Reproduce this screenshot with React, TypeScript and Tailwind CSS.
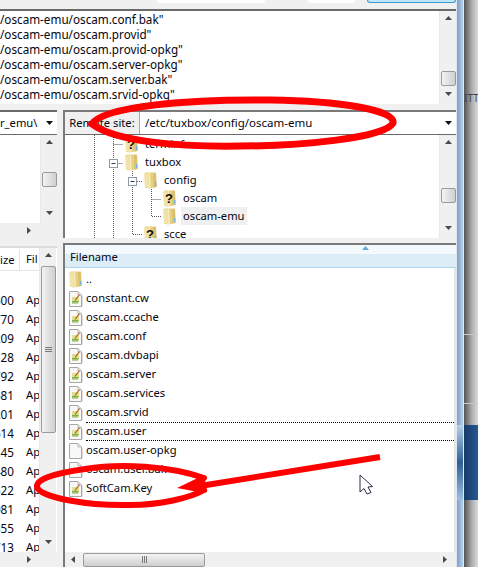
import React from 'react';

const logLines = [
  '/oscam-emu/oscam.conf.bak"',
  '/oscam-emu/oscam.provid"',
  '/oscam-emu/oscam.provid-opkg"',
  '/oscam-emu/oscam.server-opkg"',
  '/oscam-emu/oscam.server.bak"',
  '/oscam-emu/oscam.srvid-opkg"',
];

const sizes = ['500', '770', '209', '128', '792', '581', '201', '614', '145', '480', '522', '081', '355', '713'];

const files = [
  { name: '..', icon: 'folder' },
  { name: 'constant.cw', icon: 'text' },
  { name: 'oscam.ccache', icon: 'text' },
  { name: 'oscam.conf', icon: 'text' },
  { name: 'oscam.dvbapi', icon: 'text' },
  { name: 'oscam.server', icon: 'text' },
  { name: 'oscam.services', icon: 'text' },
  { name: 'oscam.srvid', icon: 'text' },
  { name: 'oscam.user', icon: 'text', focus: true },
  { name: 'oscam.user-opkg', icon: 'blank' },
  { name: 'oscam.user.bak', icon: 'blank' },
  { name: 'SoftCam.Key', icon: 'text' },
];

const Folder = ({ unknown }: { unknown?: boolean }) => (
  <svg width="13" height="17" viewBox="0 0 13 17" className="shrink-0">
    <path d="M0.5 2 Q0.5 0.5 2 0.5 L12 0.5 L12.5 15 L5 16.5 L1 15.5 Z" fill="#e6d084" />
    <path d="M0.5 2 L4.5 1 L5.2 16.3 L1 15.5 Z" fill="#f3e3a6" />
    <path d="M5.2 1 L6 1 L6.6 16 L5.4 16.3 Z" fill="#fbf5d8" />
    <path d="M9 1 L12 1 L12.5 15 L9.5 15.5 Z" fill="#dcc06e" />
    <rect x="11" y="10" width="1.4" height="4" fill="#7bb7dd" />
    {unknown && (
      <text x="6" y="12.5" textAnchor="middle" fontSize="13" fontWeight="700" fontFamily="Liberation Sans, sans-serif" fill="#0a0a0a">
        ?
      </text>
    )}
  </svg>
);

const FileIcon = ({ kind }: { kind: string }) => (
  <svg width="14" height="16" viewBox="0 0 14 16" className="shrink-0">
    <path d="M0.5 0.5 H9 L12.5 4 V15.5 H0.5 Z" fill="#f8f8f8" stroke="#a6a6a6" />
    <path d="M9 0.5 V4 H12.5" fill="#e2e2e2" stroke="#bcbcbc" />
    <path d="M13.5 5 V15.5" stroke="#dedede" />
    {kind === 'text' && (
      <>
        <rect x="3" y="6" width="7" height="6" fill="#dfe08c" />
        <path d="M3 10.5 H9.5 M3 12 H9" stroke="#74ad4c" strokeWidth="1" />
        <path d="M6 9.5 L10.5 3.5" stroke="#b4582e" strokeWidth="1.2" />
      </>
    )}
  </svg>
);

const Arrow = ({ dir }: { dir: 'up' | 'down' | 'left' | 'right' }) => {
  const points = {
    up: '0,4 3.5,0 7,4',
    down: '0,0 7,0 3.5,4',
    left: '4,0 4,7 0,3.5',
    right: '0,0 4,3.5 0,7',
  }[dir];
  return (
    <svg width="7" height="7" viewBox="0 0 7 7" className="shrink-0">
      <polygon points={points} fill="#4a4a4a" />
    </svg>
  );
};

const VScroll = ({ thumbClass, children }: { thumbClass: string; children?: React.ReactNode }) => (
  <div className="flex w-[17px] shrink-0 flex-col items-center border-l border-[#e8e8e8] bg-[#f0f0f0]">
    <div className="flex h-[17px] items-center justify-center"><Arrow dir="up" /></div>
    <div className="w-full flex-1">
      <div className={`mx-auto flex w-[15px] items-center justify-center rounded-[2px] border border-[#9a9a9a] bg-gradient-to-r from-[#f4f4f4] to-[#cfcfcf] ${thumbClass}`}>
        {children}
      </div>
    </div>
    <div className="flex h-[17px] items-center justify-center"><Arrow dir="down" /></div>
  </div>
);

const TreeRow = ({ label, indent, unknown, selected }: { label: string; indent: string; unknown?: boolean; selected?: boolean }) => (
  <div className={`flex h-[18px] items-center gap-[5px] ${indent}`}>
    <Folder unknown={unknown} />
    <span className={`flex h-[18px] items-center px-[2px] ${selected ? 'bg-[#f0f0f0]' : ''}`}>{label}</span>
  </div>
);

export default function App() {
  return (
    <div
      className="relative flex h-[567px] w-[478px] overflow-hidden bg-[#f0f0f0] text-[11.2px] text-[#050510]"
      style={{ fontFamily: '"Noto Sans", sans-serif' }}
    >
      <div className="flex w-[456px] shrink-0 flex-col">
        {/* toolbar remains */}
        <div className="flex h-[9px] items-start bg-[#f0f0f0]">
          <div className="ml-[157px] h-[3px] w-[108px] rounded-b bg-white" />
          <div className="ml-[43px] h-[3px] w-[47px] rounded-b bg-white" />
          <div className="ml-[12px] h-[3px] flex-1 rounded-b-sm border-x border-b border-[#3c9ad0] bg-[#bfe6fa]" />
        </div>

        {/* message log */}
        <div className="flex h-[95px] border-t-2 border-[#6a6a6a] bg-white">
          <div className="flex-1 overflow-hidden pt-[1px] text-[11.7px] leading-[15px]">
            {logLines.map((line) => (
              <div key={line} className="h-[15px] whitespace-nowrap">{line}</div>
            ))}
          </div>
          <VScroll thumbClass="mt-[43px] h-[15px]" />
        </div>

        <div className="h-[6px]" />

        {/* dir trees */}
        <div className="flex h-[128px]">
          <div className="flex w-[57px] shrink-0 flex-col border-t-2 border-[#6a6a6a] bg-white">
            <div className="flex h-[23px] shrink-0 items-center border-b border-[#6a6a6a] pr-[4px]">
              <span className="flex-1 whitespace-nowrap">r_emu\</span>
              <svg width="7" height="4" viewBox="0 0 7 4"><polygon points="0,0 7,0 3.5,4" fill="#111" /></svg>
            </div>
            <div className="flex flex-1">
              <div className="flex-1 bg-white" />
              <VScroll thumbClass="mt-[20px] h-[15px]" />
            </div>
            <div className="flex h-[15px] shrink-0 items-center bg-[#f0f0f0]">
              <div className="flex w-[34px] justify-end"><Arrow dir="right" /></div>
            </div>
          </div>

          <div className="ml-[6px] flex flex-1 flex-col border-t-2 border-l-2 border-[#7a7a7a] bg-white">
            <div className="flex h-[23px] shrink-0 border-b border-[#6a6a6a]">
              <div className="flex w-[75px] items-center justify-center border-r border-[#a8a8a8] bg-[#f0f0f0]">Remote site:</div>
              <div className="flex flex-1 items-center justify-between pl-[5px] pr-[4px] text-[11.5px]">
                <span>/etc/tuxbox/config/oscam-emu</span>
                <svg width="7" height="4" viewBox="0 0 7 4"><polygon points="0,0 7,0 3.5,4" fill="#111" /></svg>
              </div>
            </div>
            <div className="flex flex-1 overflow-hidden">
              <div className="relative flex-1 overflow-hidden">
                <svg className="absolute left-0 top-0" width="200" height="110" viewBox="0 0 200 110">
                  <g stroke="#555" strokeDasharray="1 1" fill="none">
                    <path d="M29.5 0 V105" />
                    <path d="M48.5 0 V105" />
                    <path d="M48.5 9.5 H58 M48.5 28.5 H58" />
                    <path d="M67.5 36 V99.5 H78" />
                    <path d="M72 46.5 H78" />
                    <path d="M86.5 52 V81.5 H96 M86.5 64.5 H96" />
                  </g>
                  <g fill="#fff" stroke="#8e9aa8">
                    <rect x="44.5" y="24.5" width="8" height="8" />
                    <rect x="63.5" y="42.5" width="8" height="8" />
                  </g>
                  <path d="M46.5 28.5 H50.5 M65.5 46.5 H69.5" stroke="#2d3a50" />
                </svg>
                <div className="relative">
                  <TreeRow indent="ml-[60px]" label="terminfo" unknown />
                  <TreeRow indent="ml-[60px]" label="tuxbox" />
                  <TreeRow indent="ml-[79px]" label="config" />
                  <TreeRow indent="ml-[98px]" label="oscam" unknown />
                  <TreeRow indent="ml-[98px]" label="oscam-emu" selected />
                  <TreeRow indent="ml-[79px]" label="scce" unknown />
                </div>
              </div>
              <VScroll thumbClass="mt-[36px] h-[15px]" />
            </div>
          </div>
        </div>

        <div className="h-[5px]" />

        {/* file lists */}
        <div className="flex h-[324px]">
          <div className="mt-[3px] flex w-[57px] shrink-0 flex-col border-t-2 border-[#dcdcdc] bg-white">
            <div className="flex flex-1 overflow-hidden">
              <div className="flex w-[39px] shrink-0 flex-col overflow-hidden">
                <div className="flex h-[23px] shrink-0 items-center border-b border-[#e5e5e5] pt-[1px]">
                  <span className="h-full w-[20px] border-r border-[#e5e5e5] pr-[5px] text-right leading-[22px]">ize</span>
                  <span className="pl-[6px]">Fil</span>
                </div>
                <div className="mt-[1px]">
                  <div className="h-[19px]" />
                  {sizes.map((size) => (
                    <div key={size} className="flex h-[19px] items-center">
                      <span className="w-[14px] text-right text-[11.7px] [direction:rtl]">{size}</span>
                      <span className="ml-[12px]">Ap</span>
                    </div>
                  ))}
                </div>
              </div>
              <VScroll thumbClass="mt-[1px] h-[167px]">
                <div className="flex flex-col gap-[1px]">
                  <div className="h-px w-[7px] bg-[#777]" />
                  <div className="h-px w-[7px] bg-[#777]" />
                  <div className="h-px w-[7px] bg-[#777]" />
                </div>
              </VScroll>
            </div>
            <div className="flex h-[15px] shrink-0 items-center bg-[#f0f0f0]">
              <div className="flex w-[34px] justify-end"><Arrow dir="right" /></div>
            </div>
          </div>

          <div className="ml-[6px] flex flex-1 flex-col border-t-2 border-l-2 border-[#7a7a7a] bg-white">
            <div className="relative h-[23px] shrink-0 border-b border-[#a8d8f0] bg-gradient-to-b from-[#f3f9fd] from-40% to-[#dcedf7] to-40%">
              <span className="absolute left-[5px] top-[4px]">Filename</span>
              <svg className="absolute left-[297px] top-[1px]" width="7" height="4" viewBox="0 0 7 4"><polygon points="0,4 3.5,0 7,4" fill="#6aa9d4" /></svg>
            </div>
            <div className="flex-1 overflow-hidden border-r-2 border-[#e5e5e5] pl-[4px] pt-[2px]">
              {files.map((file) => (
                <div key={file.name} className="flex h-[19px] items-center">
                  <span className="flex w-[17px] shrink-0">
                    {file.icon === 'folder' ? <Folder /> : <FileIcon kind={file.icon} />}
                  </span>
                  <span
                    className={`flex h-[19px] flex-1 items-center whitespace-nowrap border-y border-dotted ${
                      file.focus ? 'border-black' : 'border-transparent'
                    }`}
                  >
                    {file.name}
                  </span>
                </div>
              ))}
            </div>
            <div className="flex h-[15px] shrink-0 items-center bg-[#f0f0f0]">
              <div className="ml-[6px]"><Arrow dir="left" /></div>
              <div className="ml-[5px] flex h-[14px] w-[122px] items-center justify-center gap-[1px] rounded-[2px] border border-[#9a9a9a] bg-gradient-to-b from-[#f4f4f4] to-[#cfcfcf]">
                <div className="h-[7px] w-px bg-[#777]" />
                <div className="h-[7px] w-px bg-[#777]" />
                <div className="h-[7px] w-px bg-[#777]" />
              </div>
              <div className="ml-auto mr-[6px]"><Arrow dir="right" /></div>
            </div>
          </div>
        </div>
      </div>

      {/* window edge */}
      <div className="flex w-[8px] shrink-0 flex-col border-x border-[#dfe9f3] bg-gradient-to-r from-[#7f9fc4] to-[#b6d0ea]">
        <div className="h-[425px]" />
        <div className="h-[75px] bg-gradient-to-b from-[#b6d0ea] via-[#2f5f97] to-[#9dbfe0]" />
      </div>

      {/* next window behind */}
      <div className="flex flex-1 flex-col text-[#444]">
        <div className="h-[335px] border-b border-[#c8c8c8] bg-gradient-to-r from-[#555] via-[#aaa] to-[#e4e4e4] pt-[92px] text-[10px] leading-[12px]">ITT</div>
        <div className="h-[69px] border-b border-[#c8c8c8] bg-gradient-to-r from-[#555] via-[#aaa] to-[#e4e4e4]" />
        <div className="h-[21px] bg-gradient-to-r from-[#555] via-[#aaa] to-[#e4e4e4]" />
        <div className="h-[75px] bg-gradient-to-r from-[#173a66] to-[#255c99]" />
        <div className="flex-1 bg-gradient-to-r from-[#555] via-[#aaa] to-[#e4e4e4]" />
      </div>

      {/* red marker scribbles on top of the screenshot */}
      <svg className="pointer-events-none absolute left-0 top-0" width="478" height="567" viewBox="0 0 478 567">
        <g fill="none" stroke="#ff0000" strokeLinecap="round">
          <path d="M92 124 C104 106 190 99 270 100 C340 101 396 110 393 123 C386 138 300 146 240 146 C180 147 116 142 92 124 Z" strokeWidth="7" />
          <path d="M204 478 C170 466 120 463 85 469 C50 474 36 480 37 487 C40 498 90 506 130 505 C160 505 190 498 204 490" strokeWidth="6" />
          <path d="M380 457 L200 486" strokeWidth="6" strokeLinecap="butt" />
        </g>
        <polygon points="177,488 204,475 207,492 204,493" fill="#ff0000" />
        <path d="M360 475 V492 L364 488.5 L367 494 L371 492.5 L368 487 L372.5 486.5 Z" fill="#fff" stroke="#2c2c44" strokeWidth="1" />
      </svg>
    </div>
  );
}
